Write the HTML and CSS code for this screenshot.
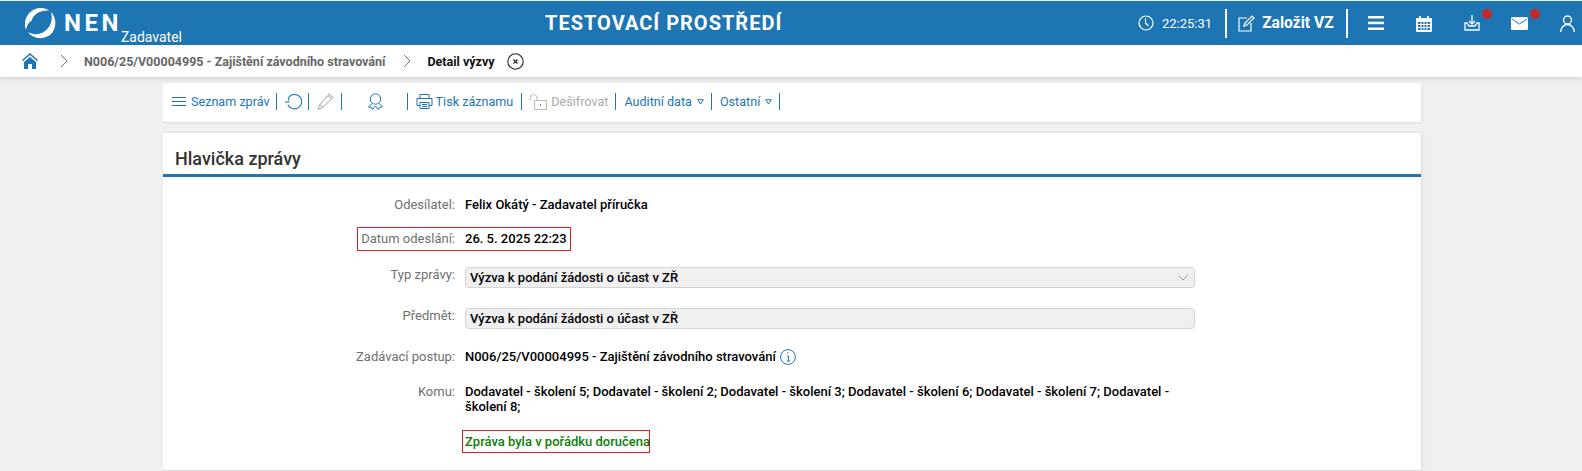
FILE: index.html
```html
<!DOCTYPE html>
<html lang="cs">
<head>
<meta charset="utf-8">
<title>Detail výzvy</title>
<link rel="stylesheet" href="styles.css">
</head>
<body>
<header class="topbar">
  <div class="brand">
    <svg class="logo" width="32" height="32" viewBox="0 0 32 32" fill="#fff"><path d="M2 23C-2 12 6 1 17 1c3 0 6 1 8 2.500C17 3 9 7 7.500 14 4.500 15.500 3 18 2 23z"/><path d="M27 5c6 6 6 17-1 23-7 5-17 4-22-3 5 3 12 3 17-1 6-4 8-12 6-19z"/></svg>
    <span class="nen">NEN</span>
    <span class="role">Zadavatel</span>
  </div>
  <div class="env">TESTOVACÍ PROSTŘEDÍ</div>
  <div class="tools">
    <svg class="ic-clock" width="16" height="16" viewBox="0 0 16 16" fill="none" stroke="#fff" stroke-width="1.2"><circle cx="8" cy="8" r="7"/><path d="M7.500 3.500V8l3 3"/></svg>
    <span class="time">22:25:31</span>
    <span class="bar bar-a"></span>
    <svg class="ic-new" width="17" height="17" viewBox="0 0 17 17" fill="none" stroke="#fff" stroke-width="1.2"><path d="M9 3H1v13h12V8"/><path d="M6 11l1-3 7-7 2 2-7 7z"/></svg>
    <span class="new">Založit VZ</span>
    <span class="bar bar-b"></span>
    <svg class="ic-menu" width="16" height="14" viewBox="0 0 16 14" fill="#fff"><rect width="16" height="2.500"/><rect y="5.700" width="16" height="2.500"/><rect y="11.500" width="16" height="2.500"/></svg>
    <svg class="ic-cal" width="16" height="17" viewBox="0 0 16 17"><path d="M1 3h2V1h2v2h6V1h2v2h2a1 1 0 0 1 1 1v12a1 1 0 0 1-1 1H1a1 1 0 0 1-1-1V4a1 1 0 0 1 1-1z" fill="#fff"/><g fill="#1d75b3"><rect x="2" y="7" width="2.500" height="2"/><rect x="5.500" y="7" width="2" height="2"/><rect x="8.500" y="7" width="2" height="2"/><rect x="11.500" y="7" width="2.500" height="2"/><rect x="2" y="10" width="2.500" height="2"/><rect x="5.500" y="10" width="2" height="2"/><rect x="8.500" y="10" width="2" height="2"/><rect x="11.500" y="10" width="2.500" height="2"/><rect x="2" y="13" width="2.500" height="2"/><rect x="5.500" y="13" width="2" height="2"/><rect x="8.500" y="13" width="2" height="2"/><rect x="11.500" y="13" width="2.500" height="2"/></g></svg>
    <span class="notify ic-dl">
      <svg width="16" height="16" viewBox="0 0 16 16" fill="none" stroke="#fff" stroke-width="1.300"><path d="M8 0v9M5 6l3 3 3-3"/><path d="M3 8H1v7h14V8h-2l-2 3H5z"/></svg>
      <span class="dot"></span>
    </span>
    <span class="notify ic-mail">
      <svg width="17" height="13" viewBox="0 0 17 13"><rect width="17" height="13" rx="1.500" fill="#fff"/><path d="M1 2l7.500 5L16 2" fill="none" stroke="#1d75b3" stroke-width="1"/></svg>
      <span class="dot"></span>
    </span>
    <svg class="ic-user" width="15" height="17" viewBox="0 0 15 17" fill="none" stroke="#fff" stroke-width="1.300"><circle cx="7.500" cy="5" r="4"/><path d="M.7 17c0-4 3-7.500 6.800-7.500s6.800 3.500 6.800 7.500"/></svg>
  </div>
</header>

<nav class="crumbs">
  <svg class="home" width="16" height="16" viewBox="0 0 16 16" fill="#1d75b3"><path d="M8 0l8 7-1 1-7-6-7 6-1-1z"/><path d="M8 4l6 5v7h-4v-5H6v5H2V9z"/></svg>
  <svg class="chev" width="8" height="14" viewBox="0 0 8 14" fill="none" stroke="#777"><path d="M1 1l6 6-6 6"/></svg>
  <span class="crumb">N006/25/V00004995 - Zajištění závodního stravování</span>
  <svg class="chev chev2" width="8" height="14" viewBox="0 0 8 14" fill="none" stroke="#777"><path d="M1 1l6 6-6 6"/></svg>
  <span class="crumb-now">Detail výzvy</span>
  <svg class="close" width="17" height="17" viewBox="0 0 17 17" fill="none" stroke="#222" stroke-width="1.100"><circle cx="8.500" cy="8.500" r="7.700"/><path d="M6.500 6.500l4 4M10.500 6.500l-4 4"/></svg>
</nav>

<main class="page">
  <div class="toolbar">
    <svg class="t-menu" width="14" height="9" viewBox="0 0 14 9" stroke="#1d75b3" fill="none"><path d="M0 .5h14M0 4.500h14M0 8.500h14"/></svg>
    <span class="tl t-first">Seznam zpráv</span>
    <span class="sep"></span>
    <svg class="t-refresh" width="17" height="16" viewBox="0 0 16 15" fill="none" stroke="#1d75b3"><path d="M3.500 3a6.800 6.800 0 1 1-.8 7"/><path d="M0 7.500h4.500M3.500 3v3"/></svg>
    <span class="sep"></span>
    <svg class="t-pen" width="18" height="17" viewBox="0 0 17 16" fill="none" stroke="#b5b5b5"><path d="M1 15.500l1.500-4.500 9-10 3.500 3-9.500 9.500z"/><path d="M2.500 11l3 2M10.500 2.500l3.500 3"/></svg>
    <span class="sep"></span>
    <svg class="t-award" width="15" height="17" viewBox="0 0 15 17" fill="none" stroke="#1d75b3"><circle cx="7.500" cy="6" r="5.200"/><path d="M4 10.500l-3.500 3.500 3 .5 1 2 3-3.500 3 3.500 1-2 3-.5-3.500-3.500"/></svg>
    <span class="sep"></span>
    <svg class="t-print" width="17" height="15" viewBox="0 0 17 15" fill="none" stroke="#1d75b3"><path d="M4 4.500V.5h9v4"/><path d="M4 11.500H1v-7h15v7h-3"/><path d="M4 8.500h9v6H4zM6 10.500h5M6 12.500h5"/></svg>
    <span class="tl t-print-l">Tisk záznamu</span>
    <span class="sep sep-8"></span>
    <svg class="t-lock" width="18" height="16" viewBox="0 0 18 16" fill="none"><path d="M1 7V4a3.500 3.500 0 0 1 7 0v3" stroke="#c4b9a8"/><path d="M5.500 6.500h12v9h-12z" stroke="#c4b9a8"/><path d="M11.500 10v2" stroke="#888"/></svg>
    <span class="tl off">Dešifrovat</span>
    <span class="sep sep-7"></span>
    <span class="tl t-drop">Auditní data</span>
    <svg class="tri" width="7" height="6" viewBox="0 0 7 6" fill="none" stroke="#1d75b3"><path d="M.7.7h5.600L3.500 5z"/></svg>
    <span class="sep sep-7"></span>
    <span class="tl t-drop">Ostatní</span>
    <svg class="tri" width="7" height="6" viewBox="0 0 7 6" fill="none" stroke="#1d75b3"><path d="M.7.7h5.600L3.500 5z"/></svg>
    <span class="sep sep-7"></span>
  </div>

  <section class="card">
    <h2 class="card-title">Hlavička zprávy</h2>
    <div class="form">
      <div class="row r1">
        <span class="lbl">Odesílatel:</span>
        <span class="val">Felix Okátý - Zadavatel příručka</span>
      </div>
      <div class="row r2">
        <div class="mark mark-date">
          <span class="lbl lbl-in">Datum odeslání:</span>
          <span class="val">26. 5. 2025 22:23</span>
        </div>
      </div>
      <div class="row r3">
        <span class="lbl">Typ zprávy:</span>
        <div class="field">Výzva k podání žádosti o účast v ZŘ
          <svg class="caret" width="10" height="6" viewBox="0 0 10 6" fill="none" stroke="#999"><path d="M.5.500L5 5 9.500.500"/></svg>
        </div>
      </div>
      <div class="row r4">
        <span class="lbl">Předmět:</span>
        <div class="field">Výzva k podání žádosti o účast v ZŘ</div>
      </div>
      <div class="row r5">
        <span class="lbl">Zadávací postup:</span>
        <span class="val">N006/25/V00004995 - Zajištění závodního stravování</span>
        <svg class="info" width="16" height="16" viewBox="0 0 16 16" fill="none" stroke="#1d75b3"><circle cx="8" cy="8" r="7.400"/><path d="M7 4h1.500M7 7h1.500v5M7 12h3"/></svg>
      </div>
      <div class="row r6">
        <span class="lbl">Komu:</span>
        <span class="val val-wrap">Dodavatel - školení 5; Dodavatel - školení 2; Dodavatel - školení 3; Dodavatel - školení 6; Dodavatel - školení 7; Dodavatel - školení 8;</span>
      </div>
      <div class="row r7">
        <span class="lbl"></span>
        <span class="mark ok">Zpráva byla v pořádku doručena</span>
      </div>
    </div>
  </section>
</main>
</body>
</html>
```
FILE: styles.css
```css
* { box-sizing: border-box; }
html, body { margin: 0; height: 471px; overflow: hidden; }
body { background: #f0f0f0; font-family: Roboto, "Liberation Sans", sans-serif; font-size: 13px; color: #000; }

.topbar { height: 44px; margin-top: 1px; background: #1d75b3; color: #fff; display: flex; align-items: center; }
.brand { width: 320px; flex: none; display: flex; align-items: center; padding-left: 24px; height: 100%; }
.logo { flex: none; }
.nen { font-size: 24px; font-weight: 700; letter-spacing: 3.500px; margin-left: 8px; margin-top: -1px; }
.role { font-size: 14px; align-self: flex-end; margin-left: -1px; }
.env { margin-left: 225px; font-size: 20px; font-weight: 700; letter-spacing: 1px; white-space: nowrap; }
.tools { margin-left: auto; flex: none; display: flex; align-items: center; height: 100%; width: 444px; }
.time { font-size: 13px; margin-left: 8px; }
.bar { width: 2px; height: 29px; background: #fff; }
.bar-a { margin-left: 13px; }
.bar-b { margin-left: 12px; }
.ic-new { margin-left: 11px; }
.new { font-size: 15.600px; font-weight: 700; margin-left: 7px; white-space: nowrap; }
.ic-menu { margin-left: 20px; }
.ic-cal { margin-left: 32px; }
.notify { position: relative; display: flex; }
.ic-dl { margin-left: 32px; }
.ic-mail { margin-left: 31px; }
.dot { position: absolute; width: 10px; height: 10px; border-radius: 50%; background: #c62828; }
.ic-dl .dot { left: 18px; top: -6px; }
.ic-mail .dot { left: 19px; top: -8px; }
.ic-user { margin-left: 32px; }

.crumbs { height: 32px; background: #fff; display: flex; align-items: center; padding-left: 22px; box-shadow: 0 2px 5px rgba(0,0,0,.12); position: relative; font-size: 12.500px; font-weight: 700; }
.chev { margin-left: 22px; }
.crumb { color: #666; margin-left: 16px; }
.chev2 { margin-left: 18px; }
.crumb-now { margin-left: 16px; color: #111; }
.close { margin-left: 12px; }

.page { padding: 6px 161px 0 163px; }
.toolbar { height: 40px; background: #fff; border-bottom: 1px solid #ddd; display: flex; align-items: center; padding: 0 0 2px 9px; color: #1d75b3; font-size: 12.600px; box-shadow: 1px 0 2px rgba(0,0,0,.06); }
.tl { white-space: nowrap; }
.t-first { margin-left: 5px; }
.sep { width: 1px; height: 17px; background: #1d75b3; margin-left: 6px; }
.sep-7 { margin-left: 7px; }
.sep-8 { margin-left: 8px; }
.t-refresh { margin-left: 8px; }
.t-pen { margin-left: 8px; }
.t-award { margin-left: 26px; }
.t-award + .sep { margin-left: 24px; }
.t-print { margin-left: 8px; }
.t-print-l { margin-left: 3px; }
.t-lock { margin-left: 7px; margin-right: 4px; }
.off { color: #aaa; }
.t-drop { margin-left: 8px; }
.tri { margin-left: 5px; }

.card { margin-top: 10px; height: 338px; background: #fff; border-bottom: 1px solid #ddd; box-shadow: 1px 0 3px rgba(0,0,0,.1); }
.card-title { margin: 0; height: 44px; padding: 16px 0 0 12px; font-size: 18px; font-weight: 500; line-height: 20px; color: #333; border-bottom: 3px solid #1d75b3; }
.form { font-size: 13px; }
.row { display: flex; align-items: flex-start; line-height: 16px; }
.lbl { width: 292px; flex: none; text-align: right; color: #6f6f6f; font-weight: 400; white-space: nowrap; }
.val { margin-left: 10px; font-weight: 500; white-space: nowrap; }
.r1 { padding-top: 20px; }
.r2 { padding-top: 14px; padding-left: 194px; }
.mark { border: 1px solid #ed1c24; }
.mark-date { display: flex; align-items: center; height: 24px; width: 214px; }
.lbl-in { width: 97px; }
.r3 { padding-top: 16px; }
.field { position: relative; margin-left: 10px; width: 730px; height: 21px; background: #f0f0f0; border: 1px solid #d4d4d4; border-radius: 4px; padding-left: 4px; font-weight: 500; line-height: 19px; }
.caret { position: absolute; right: 6px; top: 7px; }
.r4 { padding-top: 20px; }
.r5 { padding-top: 20px; align-items: center; }
.info { margin-left: 4px; }
.r6 { padding-top: 19px; }
.val-wrap { width: 725px; line-height: 15px; white-space: normal; }
.r7 { padding-top: 16px; }
.ok { color: #0a800a; font-weight: 500; margin-left: 7px; height: 23px; width: 188px; padding: 3px 0 0 2px; line-height: 16px; white-space: nowrap; }
```
